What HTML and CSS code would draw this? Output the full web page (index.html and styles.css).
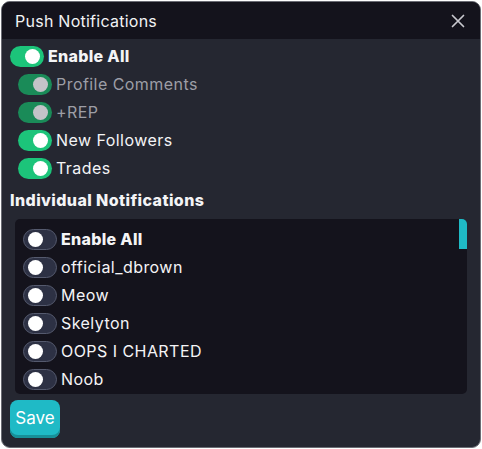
FILE: index.html
```html
<!DOCTYPE html>
<html>
<head>
<meta charset="utf-8">
<link rel="stylesheet" href="styles.css">
</head>
<body>
<div class="dialog">
  <div class="header">
    <span class="title">Push Notifications</span>
    <svg class="close" width="14" height="14" viewBox="0 0 14 14"><path d="M1.5 1.5L12.5 12.5M12.5 1.5L1.5 12.5" stroke="#c9c9cf" stroke-width="1.7" stroke-linecap="round"/></svg>
  </div>
  <div class="body">
    <div class="row"><span class="tg on"><span class="knob"></span></span><span class="lbl bold">Enable All</span></div>
    <div class="row sub"><span class="tg on dis"><span class="knob"></span></span><span class="lbl muted">Profile Comments</span></div>
    <div class="row sub"><span class="tg on dis"><span class="knob"></span></span><span class="lbl muted">+REP</span></div>
    <div class="row sub"><span class="tg on"><span class="knob"></span></span><span class="lbl">New Followers</span></div>
    <div class="row sub"><span class="tg on"><span class="knob"></span></span><span class="lbl">Trades</span></div>
    <div class="section">Individual Notifications</div>
    <div class="list">
      <div class="items">
        <div class="row"><span class="tg off"><span class="knob"></span></span><span class="lbl bold">Enable All</span></div>
        <div class="row"><span class="tg off"><span class="knob"></span></span><span class="lbl">official_dbrown</span></div>
        <div class="row"><span class="tg off"><span class="knob"></span></span><span class="lbl">Meow</span></div>
        <div class="row"><span class="tg off"><span class="knob"></span></span><span class="lbl">Skelyton</span></div>
        <div class="row"><span class="tg off"><span class="knob"></span></span><span class="lbl">OOPS I CHARTED</span></div>
        <div class="row"><span class="tg off"><span class="knob"></span></span><span class="lbl">Noob</span></div>
      </div>
      <div class="thumb"></div>
    </div>
    <button class="save">Save</button>
  </div>
</div>
</body>
</html>
```
FILE: styles.css
```css
* { box-sizing: border-box; }
html, body { margin: 0; padding: 0; background: #ffffff; }
body { font-family: "Inter", "Noto Sans", sans-serif; color: #ffffff; }
.dialog {
  width: 480px;
  height: 447px;
  margin: 1px 0 0 1px;
  border: 1px solid #6b6c74;
  border-radius: 9px;
  overflow: hidden;
  background: #252731;
  display: flex;
  flex-direction: column;
}
.header {
  height: 37px;
  background: #14131c;
  display: flex;
  align-items: center;
  justify-content: space-between;
  padding: 0 15px 0 13px;
  flex-shrink: 0;
}
.title { font-size: 16px; color: #f2f2f4; letter-spacing: 0.25px; }
.close { display: block; }
.body { padding: 3px 0 0 8px; display: flex; flex-direction: column; }
.row { display: flex; align-items: center; height: 28px; }
.row.sub { padding-left: 8px; }
.lbl { font-size: 16px; color: #f4f4f6; margin-left: 4px; white-space: nowrap; letter-spacing: 0.45px; }
.lbl.bold { font-weight: 800; letter-spacing: 0.3px; }
.lbl.muted { color: #9d9ea6; }
.tg {
  width: 34px; height: 21px; border-radius: 11px;
  position: relative; display: inline-block; flex-shrink: 0;
}
.tg .knob {
  position: absolute; top: 3px; width: 15px; height: 15px; border-radius: 50%;
  background: #ffffff;
}
.tg.on { background: #1cc47a; }
.tg.on .knob { right: 4px; }
.tg.dis { background: #1a8b58; }
.tg.dis .knob { background: #c3c3c8; }
.tg.off { background: #2d3144; border: 1px solid #555a6e; }
.tg.off .knob { left: 4px; top: 2px; }
.section {
  font-size: 16px; font-weight: 800; letter-spacing: 0.4px;
  margin-top: 7px; height: 22px; line-height: 22px; color: #f4f4f6;
}
.list {
  margin: 8px 0 0 5px;
  width: 452px;
  height: 175px;
  background: #14131c;
  border-radius: 5px;
  position: relative;
  overflow: hidden;
}
.items { padding: 6px 0 0 8px; }
.thumb {
  position: absolute; right: 0; top: 0; width: 8px; height: 30px; background: #1fbac5;
}
.save {
  margin-top: 6px;
  width: 50px; height: 38px;
  border: none; border-radius: 8px;
  background: #1fbac6;
  box-shadow: inset 0 -3px 0 #178f98;
  color: #ffffff; font-family: inherit; font-size: 17px;
  padding: 0 0 2px 0;
  cursor: pointer;
}
```
